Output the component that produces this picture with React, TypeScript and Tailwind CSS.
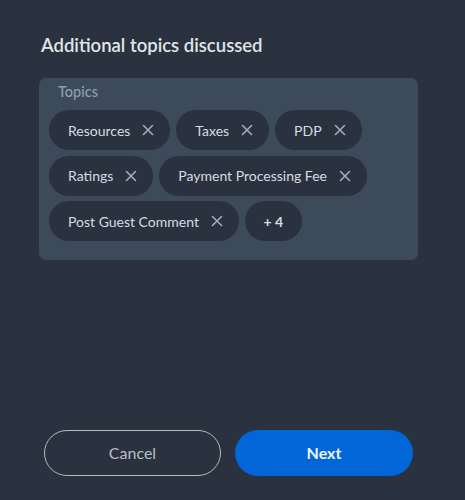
import React from "react";

const topics = ["Resources", "Taxes", "PDP", "Ratings", "Payment Processing Fee", "Post Guest Comment"];

function XIcon() {
  return (
    <svg width="12" height="12" viewBox="0 0 12 12" className="shrink-0">
      <path d="M1.5 1.5 L10.5 10.5 M10.5 1.5 L1.5 10.5" stroke="#a3adb8" strokeWidth="1.6" strokeLinecap="round" />
    </svg>
  );
}

export default function App() {
  return (
    <div
      className="w-[465px] h-[500px] bg-[#29323e] flex flex-col"
      style={{ fontFamily: "Lato, 'Noto Sans', sans-serif" }}
    >
      <div className="pt-[33px] px-[41px] text-[18.5px] leading-[24px] font-semibold text-[#e1e5ea]">
        Additional topics discussed
      </div>
      <div className="mt-[21px] ml-[39px] w-[379px] h-[182px] bg-[#3d4a5a] rounded-[7px] px-[10px] pt-[5px]">
        <div className="pl-[9px] text-[14.5px] leading-[18px] font-medium text-[#8f9eb0]">Topics</div>
        <div className="mt-[9px] flex flex-wrap gap-x-[6px] gap-y-[5.5px]">
          {topics.map((t) => (
            <div
              key={t}
              className="h-[40px] rounded-full bg-[#29323e] flex items-center pl-[19px] pr-[16px] gap-[12px] text-[14px] text-[#d7dce2]"
            >
              <span>{t}</span>
              <XIcon />
            </div>
          ))}
          <div className="h-[40px] w-[57px] rounded-full bg-[#29323e] flex items-center justify-center text-[14px] font-bold text-[#d7dce2]">
            + 4
          </div>
        </div>
      </div>
      <div className="mt-auto mb-[24px] flex px-[44px] gap-[14px]">
        <button className="w-[177px] h-[46px] rounded-full border border-[#b5bac0] text-[16px] text-[#b9bfc6]">
          Cancel
        </button>
        <button className="w-[178px] h-[46px] rounded-full bg-[#0167d9] text-[16px] font-bold text-[#eef4fc]">
          Next
        </button>
      </div>
    </div>
  );
}
